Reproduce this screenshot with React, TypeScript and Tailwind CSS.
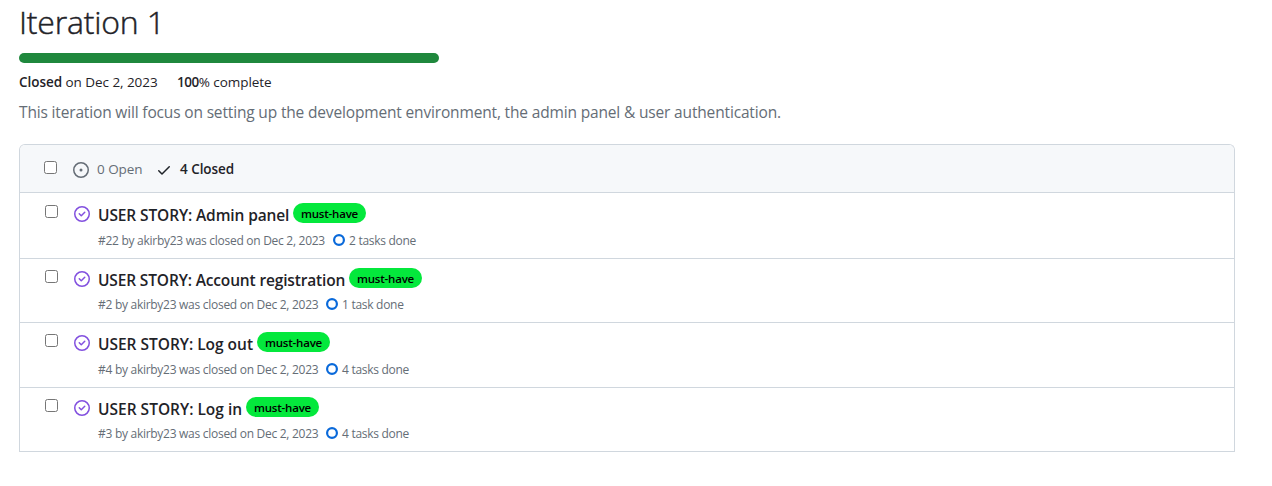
type Issue = {
  title: string;
  titleClass: string;
  meta: string;
  tasks: string;
  rowClass: string;
  lineClass: string;
  metaClass: string;
};

const issues: Issue[] = [
  {
    title: "USER STORY: Admin panel",
    titleClass: "w-[191px] tracking-[-0.12px]",
    meta: "#22 by akirby23 was closed on Dec 2, 2023",
    tasks: "2 tasks done",
    rowClass: "h-[66px] pt-[10px]",
    lineClass: "mt-[7px]",
    metaClass: "w-[227px]",
  },
  {
    title: "USER STORY: Account registration",
    titleClass: "w-[247px] tracking-[-0.15px]",
    meta: "#2 by akirby23 was closed on Dec 2, 2023",
    tasks: "1 task done",
    rowClass: "h-16 pt-[9px]",
    lineClass: "mt-[6px]",
    metaClass: "w-[220px]",
  },
  {
    title: "USER STORY: Log out",
    titleClass: "w-[155px] tracking-[-0.02px]",
    meta: "#4 by akirby23 was closed on Dec 2, 2023",
    tasks: "4 tasks done",
    rowClass: "h-[65px] pt-[9px]",
    lineClass: "mt-[7px]",
    metaClass: "w-[220px]",
  },
  {
    title: "USER STORY: Log in",
    titleClass: "w-[144px]",
    meta: "#3 by akirby23 was closed on Dec 2, 2023",
    tasks: "4 tasks done",
    rowClass: "h-16 pt-[9px]",
    lineClass: "mt-[6px]",
    metaClass: "w-[220px]",
  },
];

function Checkbox({ className }: { className: string }) {
  return (
    <input
      type="checkbox"
      aria-label="Select"
      className={`size-[13px] shrink-0 appearance-none rounded-[2.5px] border border-[#767676] bg-white ${className}`}
    />
  );
}

function OpenIcon() {
  return (
    <svg viewBox="0 0 16 16" className="mt-[17px] ml-4 size-4 shrink-0 fill-[#656d76]">
      <path d="M8 9.5a1.5 1.5 0 1 0 0-3 1.5 1.5 0 0 0 0 3Z" />
      <path d="M8 0a8 8 0 1 1 0 16A8 8 0 0 1 8 0ZM1.5 8a6.5 6.5 0 1 0 13 0 6.5 6.5 0 0 0-13 0Z" />
    </svg>
  );
}

function CheckIcon() {
  return (
    <svg viewBox="0 0 16 16" className="mt-[17px] size-4 shrink-0 fill-[#1f2328]">
      <path d="M13.78 4.22a.75.75 0 0 1 0 1.06l-7.25 7.25a.75.75 0 0 1-1.06 0L2.22 9.28a.751.751 0 0 1 .018-1.042.751.751 0 0 1 1.042-.018L6 10.94l6.72-6.72a.75.75 0 0 1 1.06 0Z" />
    </svg>
  );
}

function ClosedIcon() {
  return (
    <svg viewBox="0 0 16 16" className="mt-[3px] ml-4 size-4 shrink-0 fill-[#8250df]">
      <path d="M11.28 6.78a.75.75 0 0 0-1.06-1.06L7.25 8.69 5.78 7.22a.75.75 0 0 0-1.06 1.06l2 2a.75.75 0 0 0 1.06 0l3.5-3.5Z" />
      <path d="M16 8A8 8 0 1 1 0 8a8 8 0 0 1 16 0Zm-1.5 0a6.5 6.5 0 1 0-13 0 6.5 6.5 0 0 0 13 0Z" />
    </svg>
  );
}

function TaskRing() {
  return (
    <svg viewBox="0 0 12 12" className="mr-1 size-3 shrink-0 fill-none stroke-[#0969da]">
      <circle cx="6" cy="6" r="4.9" strokeWidth="2.2" />
    </svg>
  );
}

function IssueRow({ issue }: { issue: Issue }) {
  return (
    <li className={`flex border-b border-[#d0d7de] pl-[25px] ${issue.rowClass}`}>
      <Checkbox className="mt-[2px]" />
      <ClosedIcon />
      <div className="ml-2">
        <div className="flex h-6">
          <a className={`mr-1 text-[15.5px] leading-6 font-semibold whitespace-nowrap text-[#1f2328] ${issue.titleClass}`}>
            {issue.title}
          </a>
          <span className="h-5 w-[73px] rounded-full bg-[#04e83c] text-center text-[11.5px] leading-[21px] font-semibold tracking-[-0.2px] text-black">
            must-have
          </span>
        </div>
        <div className={`flex text-[12px] leading-[14px] tracking-[-0.28px] whitespace-nowrap text-[#656d76] ${issue.lineClass}`}>
          <span className={issue.metaClass}>{issue.meta}</span>
          <span className="ml-2 flex">
            <TaskRing />
            {issue.tasks}
          </span>
        </div>
      </div>
    </li>
  );
}

export default function App() {
  return (
    <main className="h-[486px] overflow-hidden bg-white pr-[37px] pl-[19px] font-['Open_Sans',sans-serif] text-[#1f2328]">
      <h1 className="h-[53px] text-[32px] leading-[44px] font-light tracking-[-0.2px] [-webkit-text-stroke:0.45px_#1f2328]">
        Iteration 1
      </h1>
      <div className="h-[10px] w-[420px] rounded-[6px] bg-[#1f883d]" />
      <div className="mt-[9px] flex h-5 text-[13.5px] leading-5 tracking-[-0.05px] whitespace-nowrap">
        <span className="w-[158px]">
          <b className="font-semibold">Closed</b> on Dec 2, 2023
        </span>
        <span>
          <b className="font-semibold tracking-[-0.5px]">100</b>% complete
        </span>
      </div>
      <p className="mt-2 h-6 text-[15.5px] leading-6 tracking-[-0.16px] whitespace-nowrap text-[#656d76]">
        This iteration will focus on setting up the development environment, the admin panel &amp; user authentication.
      </p>
      <section className="mt-5 rounded-t-[6px] border-x border-t border-[#d0d7de]">
        <header className="flex h-12 rounded-t-[5px] border-b border-[#d0d7de] bg-[#f6f8fa] pl-6 text-[13.5px] leading-5 tracking-[-0.05px] whitespace-nowrap">
          <Checkbox className="mt-4" />
          <OpenIcon />
          <span className="mt-[14px] ml-2 w-[59px] text-[#656d76]">0 Open</span>
          <CheckIcon />
          <span className="mt-[14px] ml-2 font-semibold">4 Closed</span>
        </header>
        <ul>
          {issues.map((issue) => (
            <IssueRow key={issue.title} issue={issue} />
          ))}
        </ul>
      </section>
    </main>
  );
}
